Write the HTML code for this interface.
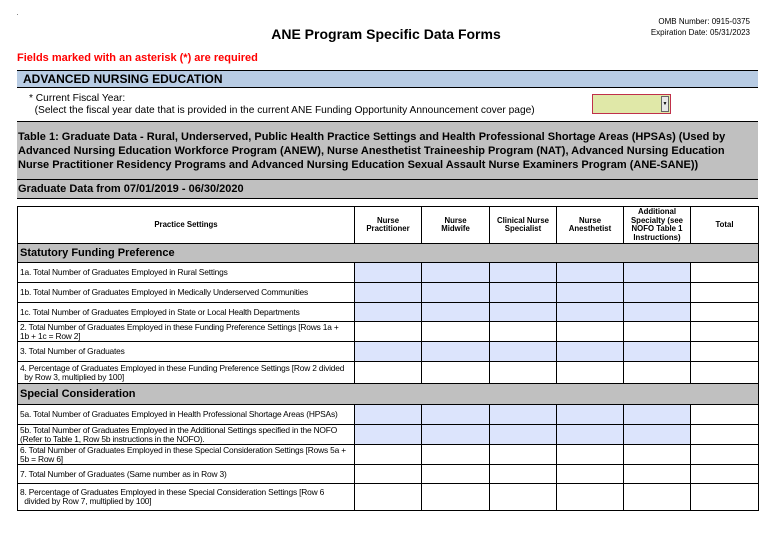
<!DOCTYPE html>
<html><head><meta charset="utf-8"><style>
*{margin:0;padding:0;box-sizing:border-box}
body{width:772px;height:534px;background:#fff;font-family:"Liberation Sans",Arial,sans-serif;position:relative;overflow:hidden;color:#000}
.a{position:absolute}
table{position:absolute;left:17px;top:206px;width:742px;border-collapse:collapse;table-layout:fixed}
td{border:1px solid #000;padding:0;font-size:8.4px;line-height:9px;vertical-align:middle;white-space:nowrap;overflow:hidden}
td.l{padding-left:2px;letter-spacing:-0.18px}
th{border:1px solid #000;font-size:7.8px;line-height:8.5px;font-weight:bold;height:37px}
.b{background:#dce4fc}
.s td{background:#c0c0c0;font-size:11px;font-weight:bold;padding-left:2px}
</style></head><body>
<div class="a" style="left:17px;top:14px;width:1px;height:1px;background:#888"></div>
<div class="a" style="left:0;width:772px;top:26px;text-align:center;font-weight:bold;font-size:14px">ANE Program Specific Data Forms</div>
<div class="a" style="right:22px;top:16px;font-size:8px;line-height:11px;text-align:right">OMB Number: 0915-0375<br>Expiration Date: 05/31/2023</div>
<div class="a" style="left:17px;top:52px;font-size:11px;font-weight:bold;color:#ff0000">Fields marked with an asterisk (*) are required</div>
<div class="a" style="left:17px;top:70px;width:741px;height:18px;background:#b8cce4;border-top:1px solid #000;border-bottom:1px solid #000;font-size:12px;font-weight:bold;padding-left:6px;line-height:17px">ADVANCED NURSING EDUCATION</div>
<div class="a" style="left:29px;top:93px;font-size:10.2px;line-height:12px;white-space:nowrap">* Current Fiscal Year:<br>&nbsp;&nbsp;(Select the fiscal year date that is provided in the current ANE Funding Opportunity Announcement cover page)</div>
<div class="a" style="left:592px;top:94px;width:79px;height:20px;background:#e0e8a8;border:1px solid #c0304a"></div>
<div class="a" style="left:661px;top:96px;width:8px;height:16px;background:#e8e8e8;border:1px solid #666;font-size:5px;text-align:center;line-height:14px">▼</div>
<div class="a" style="left:17px;top:121px;width:741px;height:59px;background:#c0c0c0;border-top:1px solid #000;border-bottom:1px solid #000;font-size:11px;font-weight:bold;line-height:14px;padding:8px 0 0 1px">Table 1: Graduate Data - Rural, Underserved, Public Health Practice Settings and Health Professional Shortage Areas (HPSAs) (Used by Advanced Nursing Education Workforce Program (ANEW), Nurse Anesthetist Traineeship Program (NAT), Advanced Nursing Education Nurse Practitioner Residency Programs and Advanced Nursing Education Sexual Assault Nurse Examiners Program (ANE-SANE))</div>
<div class="a" style="left:17px;top:180px;width:741px;height:19px;background:#c0c0c0;border-bottom:1px solid #000;font-size:11px;font-weight:bold;line-height:18px;padding-left:1px">Graduate Data from 07/01/2019 - 06/30/2020</div>

<table>
<colgroup><col style="width:337px"><col style="width:67px"><col style="width:68px"><col style="width:67px"><col style="width:67px"><col style="width:67px"><col style="width:68px"></colgroup>
<tr><th>Practice Settings</th><th>Nurse<br>Practitioner</th><th>Nurse<br>Midwife</th><th>Clinical Nurse<br>Specialist</th><th>Nurse<br>Anesthetist</th><th>Additional<br>Specialty (see<br>NOFO Table 1<br>Instructions)</th><th>Total</th></tr>
<tr class="s" style="height:19px"><td colspan="7">Statutory Funding Preference</td></tr>
<tr style="height:20px"><td class="l">1a. Total Number of Graduates Employed in Rural Settings</td><td class="b"></td><td class="b"></td><td class="b"></td><td class="b"></td><td class="b"></td><td></td></tr>
<tr style="height:20px"><td class="l">1b. Total Number of Graduates Employed in Medically Underserved Communities</td><td class="b"></td><td class="b"></td><td class="b"></td><td class="b"></td><td class="b"></td><td></td></tr>
<tr style="height:19px"><td class="l">1c. Total Number of Graduates Employed in State or Local Health Departments</td><td class="b"></td><td class="b"></td><td class="b"></td><td class="b"></td><td class="b"></td><td></td></tr>
<tr style="height:20px"><td class="l">2. Total Number of Graduates Employed in these Funding Preference Settings [Rows 1a +<br>1b + 1c = Row 2]</td><td></td><td></td><td></td><td></td><td></td><td></td></tr>
<tr style="height:20px"><td class="l">3. Total Number of Graduates</td><td class="b"></td><td class="b"></td><td class="b"></td><td class="b"></td><td class="b"></td><td></td></tr>
<tr style="height:22px"><td class="l">4. Percentage of Graduates Employed in these Funding Preference Settings [Row 2 divided<br>&nbsp;&nbsp;by Row 3, multiplied by 100]</td><td></td><td></td><td></td><td></td><td></td><td></td></tr>
<tr class="s" style="height:21px"><td colspan="7">Special Consideration</td></tr>
<tr style="height:20px"><td class="l">5a. Total Number of Graduates Employed in Health Professional Shortage Areas (HPSAs)</td><td class="b"></td><td class="b"></td><td class="b"></td><td class="b"></td><td class="b"></td><td></td></tr>
<tr style="height:20px"><td class="l">5b. Total Number of Graduates Employed in the Additional Settings specified in the NOFO<br>(Refer to Table 1, Row 5b instructions in the NOFO).</td><td class="b"></td><td class="b"></td><td class="b"></td><td class="b"></td><td class="b"></td><td></td></tr>
<tr style="height:20px"><td class="l">6. Total Number of Graduates Employed in these Special Consideration Settings [Rows 5a +<br>5b = Row 6]</td><td></td><td></td><td></td><td></td><td></td><td></td></tr>
<tr style="height:19px"><td class="l">7. Total Number of Graduates (Same number as in Row 3)</td><td></td><td></td><td></td><td></td><td></td><td></td></tr>
<tr style="height:27px"><td class="l">8. Percentage of Graduates Employed in these Special Consideration Settings [Row 6<br>&nbsp;&nbsp;divided by Row 7, multiplied by 100]</td><td></td><td></td><td></td><td></td><td></td><td></td></tr>
</table>
</body></html>
